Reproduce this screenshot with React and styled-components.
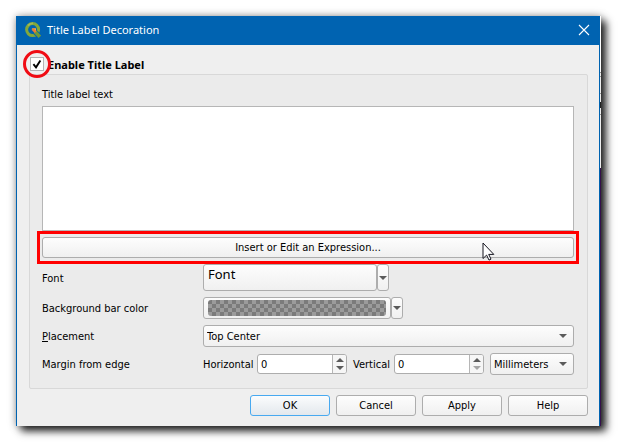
import React from "react";
import styled, { createGlobalStyle, css } from "styled-components";

const GlobalStyle = createGlobalStyle`
  *, *::before, *::after { box-sizing: border-box; }
  body {
    margin: 0;
    background: #fff;
    color: #000;
    font-family: "DejaVu Sans Condensed", "DejaVu Sans", sans-serif;
    font-size: 11px;
    line-height: 16px;
  }
  button, input, select, textarea { font: inherit; color: inherit; margin: 0; }
`;

const Desktop = styled.main`
  padding: 16px 17px 16px 16px;
`;

const WindowStack = styled.div`
  display: grid;
  grid-template-columns: minmax(0, 1fr) 1px;
  box-shadow: 0 0 8px rgba(0, 0, 0, 0.35), 5px 5px 8px rgba(0, 0, 0, 0.85);
`;

const WindowBehind = styled.div`
  background: linear-gradient(
    #fff 56px, #999 56px 57px, #eee 57px 60px, #999 60px 61px, #eee 61px 77px,
    #999 77px 78px, #eee 78px 86px, #222 86px 92px, #eee 92px 98px,
    #999 98px 99px, #eee 99px 152px, #35104a 152px
  );
`;

const Dialog = styled.section`
  background: #efefef;
  border: solid #0063b1;
  border-width: 0 1px;
`;

const TitleBar = styled.header`
  display: flex;
  align-items: center;
  height: 29px;
  padding: 0 9px 2px 8px;
  background: #0063b1;
  color: #fff;
`;

const Title = styled.h1`
  flex: 1;
  margin: 0 0 0 6px;
  font: 400 11px/16px "Noto Sans", "Open Sans", sans-serif;
`;

const CloseButton = styled.button`
  display: flex;
  padding: 0;
  border: 0;
  background: none;
`;

const Body = styled.form`
  padding: 11px 11px 10px 12px;
`;

const GroupHeader = styled.label`
  display: flex;
  align-items: center;
  width: max-content;
  height: 18px;
  padding-left: 1px;
  gap: 4px;
  font-family: "Noto Sans", "Open Sans", sans-serif;
  font-weight: 700;
`;

const CheckHolder = styled.span`
  position: relative;
  display: flex;
  margin-bottom: 3px;
`;

const Checkbox = styled.input`
  appearance: none;
  width: 14px;
  height: 14px;
  border: 1px solid #b4b4b4;
  background: #fff;
`;

const CheckMark = styled.svg`
  position: absolute;
  inset: 0;
  pointer-events: none;
`;

const CircleMark = styled.span`
  position: absolute;
  inset: -7px;
  border: 3px solid #f00c14;
  border-radius: 50%;
  pointer-events: none;
`;

const Group = styled.div`
  display: flex;
  flex-direction: column;
  gap: 6px;
  padding: 12px 13px 13px 12px;
  border: 1px solid #d8d8d8;
  border-radius: 2px;
  background: #ebebeb;
`;

const Field = styled.div`
  display: flex;
  flex-direction: column;
  gap: 3px;
`;

const TextArea = styled.textarea`
  height: 125px;
  padding: 4px;
  border: 1px solid #b6b6b6;
  background: #fff;
  resize: none;
`;

const raised = css`
  border: 1px solid #adadad;
  border-radius: 3px;
  background: linear-gradient(#fdfdfd, #f0f0f0);
`;

const PushButton = styled.button`
  ${raised}
  width: ${(p) => (p.$wide ? "100%" : "80px")};
  height: 21px;
  padding: 1px 0 0;
  ${(p) => p.$primary && css`
    border-color: #48a9f0;
    background: linear-gradient(#fbfcfd, #e3e8ed);
  `}
`;

const Highlight = styled.div`
  position: relative;
  display: flex;
  &::after {
    content: "";
    position: absolute;
    inset: -6px -5px;
    border: 3px solid #f00;
    pointer-events: none;
  }
`;

const Pointer = styled.svg`
  position: absolute;
  right: 79px;
  top: 5px;
  z-index: 1;
`;

const FormRow = styled.div`
  display: grid;
  grid-template-columns: 161px minmax(0, 1fr);
  align-items: center;
`;

const RowLabel = styled.label`
  padding-top: 2px;
`;

const Controls = styled.div`
  display: flex;
  align-items: center;
`;

const FontButton = styled.button`
  ${raised}
  width: 174px;
  height: 27px;
  padding: 0 4px 7px;
  text-align: left;
  font: 400 13px/18px "Noto Sans", "Open Sans", sans-serif;
`;

const ColorButton = styled.button`
  ${raised}
  width: 188px;
  height: 22px;
  padding: 2px 4px;
`;

const Swatch = styled.span`
  display: block;
  height: 16px;
  border-radius: 3px;
  background: repeating-conic-gradient(#9b9b9b 0 25%, #7b7b7b 0 50%) 0 0 / 8px 8px;
`;

const MenuButton = styled.button`
  ${raised}
  display: flex;
  align-items: center;
  justify-content: center;
  align-self: stretch;
  width: 12px;
  padding: 0;
`;

const SelectBox = styled.div`
  position: relative;
  flex: ${(p) => (p.$width ? "none" : 1)};
  width: ${(p) => (p.$width ? p.$width + "px" : "auto")};
  margin-left: ${(p) => (p.$width ? "auto" : 0)};
`;

const Select = styled.select`
  ${raised}
  appearance: none;
  display: block;
  width: 100%;
  height: 22px;
  padding: 2px 20px 0 3px;
`;

const SelectArrow = styled.svg`
  position: absolute;
  right: 7px;
  top: 9px;
  pointer-events: none;
`;

const SpinLabel = styled.label`
  flex: none;
  width: ${(p) => p.$width}px;
  padding-top: 2px;
`;

const SpinBox = styled.div`
  display: flex;
  width: 90px;
  height: 20px;
  margin-right: ${(p) => (p.$spaced ? 6 : 0)}px;
  border: 1px solid #adadad;
  border-radius: 3px;
  background: #fff;
  overflow: hidden;
`;

const SpinInput = styled.input`
  flex: 1;
  min-width: 0;
  padding: 2px 3px 0;
  border: 0;
  background: none;
  appearance: textfield;
  &::-webkit-inner-spin-button { appearance: none; margin: 0; }
`;

const SpinSteps = styled.div`
  display: grid;
  width: 14px;
  border-left: 1px solid #b6b6b6;
  background: #f6f6f6;
`;

const StepButton = styled.button`
  display: flex;
  align-items: ${(p) => (p.$up ? "flex-end" : "flex-start")};
  justify-content: center;
  min-height: 0;
  padding: 2px 0;
  border: 0;
  background: none;
  color: #5b5b5b;
  &:disabled { color: #a5a5a5; }
`;

const Actions = styled.footer`
  display: flex;
  justify-content: flex-end;
  gap: 6px;
  margin-top: 6px;
`;

const Logo = () => (
  <svg width="16" height="16" viewBox="0 0 16 16" aria-hidden="true">
    <circle cx="7.6" cy="7.6" r="6" fill="none" stroke="#83a83b" strokeWidth="3" />
    <path d="M3 3.6A6 6 0 0 1 8 1.4" fill="none" stroke="#a3b85a" strokeWidth="1.6" />
    <path d="M9 9l7 7" stroke="#0063b1" strokeWidth="5.2" />
    <path d="M10 9.8l4.8 5" stroke="#6f9938" strokeWidth="3.4" />
    <path d="M6.6 6.2h4.4v3.8z" fill="#efb34c" />
    <path d="M7.4 6.9l3.3 3.3" stroke="#ee7b33" strokeWidth="2.6" />
  </svg>
);

const DownArrow = ({ as: Tag = "svg" }) => (
  <Tag width="8" height="4" viewBox="0 0 8 4" aria-hidden="true">
    <path d="M0 0h8L4 4z" fill="#5b5b5b" />
  </Tag>
);

const Combo = ({ id, label, width, options }) => (
  <SelectBox $width={width}>
    <Select id={id} aria-label={label}>
      {options.map((o) => <option key={o}>{o}</option>)}
    </Select>
    <DownArrow as={SelectArrow} />
  </SelectBox>
);

const Spin = ({ id, label, labelWidth, spaced, downDisabled }) => (
  <>
    <SpinLabel htmlFor={id} $width={labelWidth}>{label}</SpinLabel>
    <SpinBox $spaced={spaced}>
      <SpinInput id={id} type="number" defaultValue="0" />
      <SpinSteps>
        <StepButton type="button" $up aria-label={`Increase ${label}`}>
          <svg width="8" height="4" viewBox="0 0 8 4"><path d="M0 4h8L4 0z" fill="currentColor" /></svg>
        </StepButton>
        <StepButton type="button" disabled={downDisabled} aria-label={`Decrease ${label}`}>
          <svg width="8" height="4" viewBox="0 0 8 4"><path d="M0 0h8L4 4z" fill="currentColor" /></svg>
        </StepButton>
      </SpinSteps>
    </SpinBox>
  </>
);

export default function App() {
  return (
    <Desktop>
      <GlobalStyle />
      <WindowStack>
        <Dialog role="dialog" aria-labelledby="dialog-title">
          <TitleBar>
            <Logo />
            <Title id="dialog-title">Title Label Decoration</Title>
            <CloseButton type="button" aria-label="Close">
              <svg width="12" height="12" viewBox="0 0 12 12">
                <path d="M1 1l10 10M11 1L1 11" stroke="#fff" strokeWidth="1.1" />
              </svg>
            </CloseButton>
          </TitleBar>
          <Body onSubmit={(e) => e.preventDefault()}>
            <GroupHeader>
              <CheckHolder>
                <Checkbox type="checkbox" defaultChecked />
                <CheckMark width="14" height="14" viewBox="0 0 14 14">
                  <path d="M3.4 7.2l2.6 3.1L10.4 3.4" fill="none" stroke="#000" strokeWidth="1.9" />
                </CheckMark>
                <CircleMark />
              </CheckHolder>
              Enable Title Label
            </GroupHeader>
            <Group>
              <Field>
                <label htmlFor="title-text">Title label text</label>
                <TextArea id="title-text" />
              </Field>
              <Highlight>
                <PushButton type="button" $wide>Insert or Edit an Expression...</PushButton>
                <Pointer width="13" height="19" viewBox="0 0 13 19" aria-hidden="true">
                  <path
                    d="M1 1v15.5l3.6-3.4 2.4 5 2-1-2.3-4.7h5.1z"
                    fill="#fff" stroke="#15151f" strokeWidth="1"
                  />
                </Pointer>
              </Highlight>
              <FormRow>
                <RowLabel htmlFor="font">Font</RowLabel>
                <Controls>
                  <FontButton id="font" type="button">Font</FontButton>
                  <MenuButton type="button" aria-label="Font options"><DownArrow /></MenuButton>
                </Controls>
              </FormRow>
              <FormRow>
                <RowLabel htmlFor="bar-color">Background bar color</RowLabel>
                <Controls>
                  <ColorButton id="bar-color" type="button"><Swatch /></ColorButton>
                  <MenuButton type="button" aria-label="Color options"><DownArrow /></MenuButton>
                </Controls>
              </FormRow>
              <FormRow>
                <RowLabel htmlFor="placement"><u>P</u>lacement</RowLabel>
                <Controls>
                  <Combo id="placement" options={["Top Center"]} />
                </Controls>
              </FormRow>
              <FormRow>
                <RowLabel as="span">Margin from edge</RowLabel>
                <Controls>
                  <Spin id="horizontal" label="Horizontal" labelWidth={54} spaced />
                  <Spin id="vertical" label="Vertical" labelWidth={41} downDisabled />
                  <Combo label="Units" width={84} options={["Millimeters"]} />
                </Controls>
              </FormRow>
            </Group>
            <Actions>
              <PushButton type="submit" $primary>OK</PushButton>
              <PushButton type="button">Cancel</PushButton>
              <PushButton type="button">Apply</PushButton>
              <PushButton type="button">Help</PushButton>
            </Actions>
          </Body>
        </Dialog>
        <WindowBehind />
      </WindowStack>
    </Desktop>
  );
}
